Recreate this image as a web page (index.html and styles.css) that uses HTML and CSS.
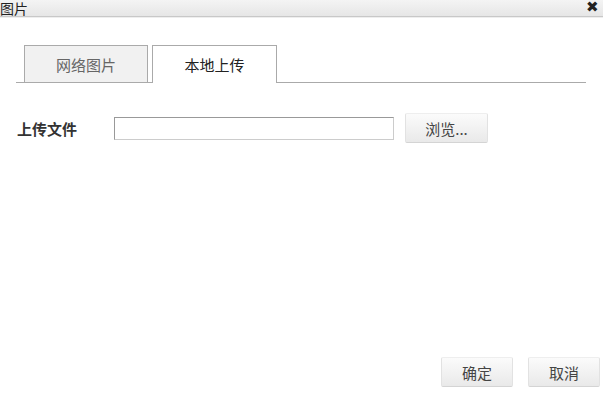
FILE: index.html
```html
<!DOCTYPE html>
<html lang="zh">

<head>
    <meta charset="UTF-8">
    <meta name="viewport" content="width=device-width, initial-scale=1.0">
    <title>图片</title>

    <link rel="stylesheet" href="styles.css">
</head>

<body>
    <div class="dialog">
        <div class="titlebar">
            <span class="title">图片</span>
            <span class="close">&#x2716;</span>
        </div>

        <div class="tabs">
            <div class="tab">网络图片</div>
            <div class="tab active">本地上传</div>
        </div>

        <div class="row">
            <label class="label">上传文件</label>
            <input class="file" type="text">
            <button class="btn browse">浏览...</button>
        </div>

        <div class="footer">
            <button class="btn">确定</button>
            <button class="btn">取消</button>
        </div>
    </div>
</body>

</html>
```

FILE: styles.css
```css
body {
    margin: 0;
    background: #fff;
    font-family: "Noto Sans CJK SC", "Liberation Sans", sans-serif;
    color: #333;
}

.dialog {
    width: 603px;
    height: 393px;
    display: flex;
    flex-direction: column;
    overflow: hidden;
}

.titlebar {
    height: 16px;
    display: flex;
    justify-content: space-between;
    align-items: flex-end;
    background: linear-gradient(#f4f4f4, #e6e6e6);
    border-bottom: 1px solid #c8c8c8;
    box-shadow: 0 1px 0 #eee;
    overflow: hidden;
}

.title {
    font-size: 14px;
    line-height: 14px;
    margin-bottom: 1px;
    color: #222;
}

.close {
    font-size: 15px;
    line-height: 15px;
    margin: 0 4px 3px 0;
    color: #222;
}

.tabs {
    display: flex;
    gap: 4px;
    margin: 28px 0 0 16px;
    padding-left: 8px;
    width: 562px;
    height: 37px;
    border-bottom: 1px solid #aaa;
}

.tab {
    flex: none;
    width: 122px;
    height: 36px;
    border: 1px solid #aaa;
    border-bottom: none;
    background: #f1f1f1;
    color: #666;
    font-size: 15px;
    display: flex;
    align-items: center;
    justify-content: center;
}

.tab.active {
    width: 123px;
    height: 37px;
    background: #fff;
    color: #222;
}

.row {
    display: flex;
    align-items: center;
    margin-top: 30px;
    padding-left: 17px;
}

.label {
    width: 97px;
    font-size: 15px;
    font-weight: bold;
    color: #333;
}

.file {
    width: 278px;
    height: 21px;
    margin: 0;
    padding: 0;
    border: 1px solid #ccc;
    border-top-color: #999;
    border-left-color: #999;
}

.btn {
    font-family: "Noto Sans CJK SC", "Liberation Sans", sans-serif;
    font-size: 15px;
    color: #444;
    height: 30px;
    width: 72px;
    padding: 0;
    border: 1px solid #e2e2e2;
    border-top-color: #eee;
    border-bottom-color: #d4d4d4;
    border-radius: 2px;
    background: linear-gradient(#fbfbfb, #e9e9e9);
    cursor: pointer;
}

.browse {
    width: 83px;
    margin-left: 11px;
}

.footer {
    margin-top: auto;
    margin-bottom: 6px;
    display: flex;
    justify-content: flex-end;
    gap: 15px;
    padding-right: 3px;
}
```
